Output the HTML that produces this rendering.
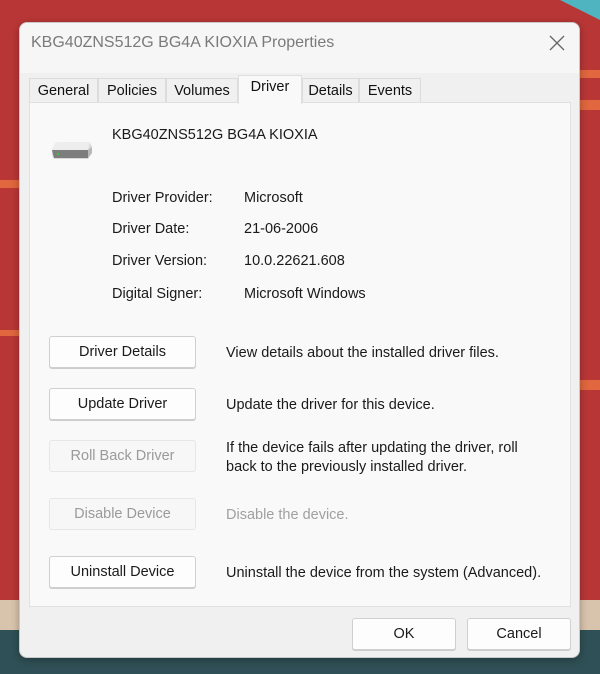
<!DOCTYPE html>
<html><head><meta charset="utf-8"><style>
*{margin:0;padding:0;box-sizing:border-box}
body{width:600px;height:674px;overflow:hidden;position:relative;font-family:"Liberation Sans",sans-serif;background:#b93636}
.abs{position:absolute}
.dlg{left:19px;top:22px;width:561px;height:636px;background:#f0f0f0;border-radius:8px;border:1px solid #c9c9c9;box-shadow:0 2px 8px rgba(0,0,0,.3);overflow:hidden}
.tb{left:0;top:0;width:100%;height:50px;background:#f6f6f6}
.title{left:11px;top:11px;font-size:16px;color:#7a7a7a}
.tab{top:55px;height:25px;background:#f0f0f0;border:1px solid #dcdcdc;border-bottom:none;font-size:14.5px;color:#111;padding-top:4px;text-align:center}
.panel{left:9px;top:79px;width:542px;height:505px;background:#f9f9f9;border:1px solid #e0e0e0}
.t{font-size:14.5px;color:#1a1a1a}
.btn{width:147px;height:32px;background:#fdfdfd;border:1px solid #d0d0d0;border-radius:3px;font-size:14.5px;text-align:center;line-height:30px;color:#1a1a1a;box-shadow:0 1px 0 #ccc}
.dis{background:#f7f7f7;color:#9a9a9a;border-color:#e6e6e6;box-shadow:none}
</style></head><body>
<div class="abs" style="left:0;top:600px;width:600px;height:74px;background:#d8c4ad"></div>
<div class="abs" style="left:0;top:630px;width:600px;height:44px;background:#2f5056"></div>
<div class="abs" style="left:0;top:180px;width:19px;height:8px;background:#e0673e"></div>
<div class="abs" style="left:0;top:330px;width:19px;height:6px;background:#e0673e"></div>
<div class="abs" style="left:580px;top:70px;width:20px;height:8px;background:#e0673e"></div>
<div class="abs" style="left:580px;top:100px;width:20px;height:10px;background:#e0673e"></div>
<div class="abs" style="left:580px;top:380px;width:20px;height:10px;background:#e0673e"></div>
<div class="abs" style="left:560px;top:0;width:40px;height:20px;background:#4fb3c0;clip-path:polygon(0 0,100% 0,100% 100%)"></div>
<div class="abs dlg">
 <div class="abs tb"></div>
 <div class="abs title">KBG40ZNS512G BG4A KIOXIA Properties</div>
 <svg class="abs" style="left:529px;top:12px" width="16" height="16"><path d="M1 1L15 15M15 1L1 15" stroke="#666" stroke-width="1.3"/></svg>
 <div class="abs tab" style="left:9px;width:69px">General</div>
 <div class="abs tab" style="left:78px;width:68px">Policies</div>
 <div class="abs tab" style="left:146px;width:72px">Volumes</div>
 <div class="abs tab" style="left:282px;width:57px">Details</div>
 <div class="abs tab" style="left:339px;width:62px">Events</div>
 <div class="abs panel"></div>
 <div class="abs tab" style="left:218px;top:52px;height:29px;width:64px;background:#f9f9f9;border-color:#e0e0e0;padding-top:3px">Driver</div>
 <svg class="abs" style="left:30px;top:118px" width="44" height="20"><path d="M2 8L8 2H40L42 6V12L38 18H4L2 14Z" fill="#d8d8d8"/><path d="M2 9H38V17H4Z" fill="#7d7d7d"/><path d="M38 9L42 6V12L38 17Z" fill="#b8b8b8"/><path d="M5 2L8 1H40L38 9H2Z" fill="#ededed"/><rect x="7" y="12" width="2" height="2" fill="#3c3"/></svg>
 <div class="abs t" style="left:92px;top:104px">KBG40ZNS512G BG4A KIOXIA</div>
 <div class="abs t" style="left:92px;top:167px">Driver Provider:</div><div class="abs t" style="left:224px;top:167px">Microsoft</div>
 <div class="abs t" style="left:92px;top:198px">Driver Date:</div><div class="abs t" style="left:224px;top:198px">21-06-2006</div>
 <div class="abs t" style="left:92px;top:230px">Driver Version:</div><div class="abs t" style="left:224px;top:230px">10.0.22621.608</div>
 <div class="abs t" style="left:92px;top:263px">Digital Signer:</div><div class="abs t" style="left:224px;top:263px">Microsoft Windows</div>
 <div class="abs btn" style="left:29px;top:313px">Driver Details</div><div class="abs t" style="left:206px;top:322px">View details about the installed driver files.</div>
 <div class="abs btn" style="left:29px;top:365px">Update Driver</div><div class="abs t" style="left:206px;top:374px">Update the driver for this device.</div>
 <div class="abs btn dis" style="left:29px;top:417px">Roll Back Driver</div><div class="abs t" style="left:206px;top:416px;line-height:19px">If the device fails after updating the driver, roll<br>back to the previously installed driver.</div>
 <div class="abs btn dis" style="left:29px;top:475px">Disable Device</div><div class="abs t" style="left:206px;top:484px;color:#a0a0a0">Disable the device.</div>
 <div class="abs btn" style="left:29px;top:533px">Uninstall Device</div><div class="abs t" style="left:206px;top:542px">Uninstall the device from the system (Advanced).</div>
 <div class="abs btn" style="left:332px;top:595px;width:104px">OK</div>
 <div class="abs btn" style="left:447px;top:595px;width:104px">Cancel</div>
</div>
</body></html>
